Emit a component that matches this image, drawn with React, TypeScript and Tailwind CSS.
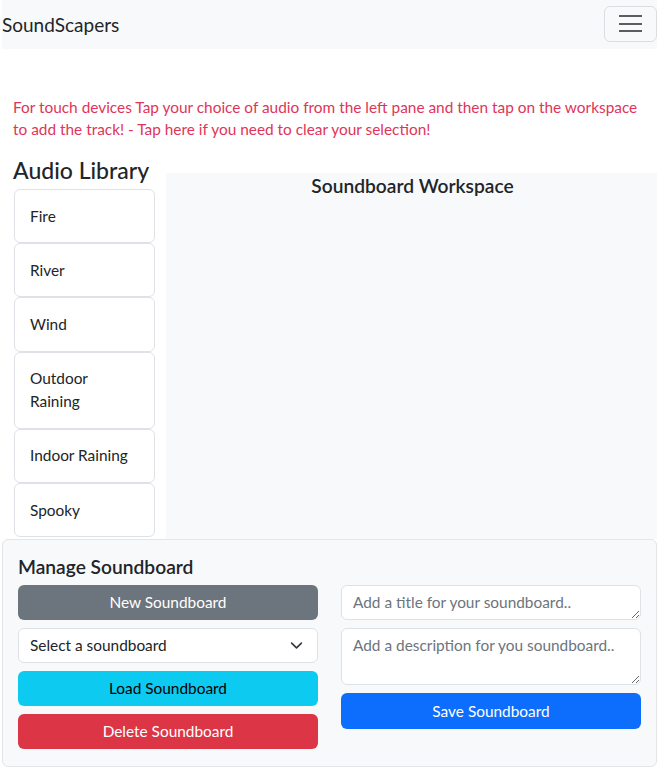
import React from "react";

const tracks = ["Fire", "River", "Wind", "Outdoor Raining", "Indoor Raining", "Spooky"];

export default function App() {
  return (
    <div className="min-h-[770px] bg-white text-[#212529] font-['Lato',sans-serif] text-[15.4px]">
      {/* Navbar */}
      <nav className="mx-[2px] h-[49px] bg-[#f8f9fa] flex items-center justify-between">
        <span className="text-[19px] leading-none">SoundScapers</span>
        <button className="w-[53px] h-[36px] mt-[-2px] border border-[#dcdde0] rounded-[6px] flex flex-col items-center justify-center gap-[5.5px]">
          <span className="block w-[23px] h-[2px] bg-[#5b5d60]" />
          <span className="block w-[23px] h-[2px] bg-[#5b5d60]" />
          <span className="block w-[23px] h-[2px] bg-[#5b5d60]" />
        </button>
      </nav>

      {/* Hint */}
      <p className="mt-[47px] px-[13px] text-[#e0355a] leading-[22px]">
        For touch devices Tap your choice of audio from the left pane and then tap on the workspace to add the track! - Tap here if you need to clear your selection!
      </p>

      {/* Library + workspace */}
      <div className="mt-[17px] flex">
        <div className="w-[153px] ml-[13px] shrink-0 pb-[2px]">
          <h3 className="text-[23px] leading-[27px] font-medium mb-[5px]">Audio Library</h3>
          <ul className="ml-[1px] w-[141px]">
            {tracks.map((t) => (
              <li
                key={t}
                className="border border-[#dee2e6] rounded-[6px] bg-white px-[15px] py-[14.6px] leading-[23px] text-[#212529]"
              >
                {t}
              </li>
            ))}
          </ul>
        </div>
        <div className="flex-1 mt-[16px] mr-[2px] bg-[#f8f9fa]">
          <h5 className="text-center text-[19.2px] font-semibold leading-[24px] mt-[1px] pl-[2px]">
            Soundboard Workspace
          </h5>
        </div>
      </div>

      {/* Manage panel */}
      <div className="mx-[2px] bg-[#f8f9fa] border border-[#e3e5e8] rounded-[6px] px-[15px] pt-[15px] pb-[17px]">
        <h5 className="text-[19.2px] font-semibold leading-[24px] mb-[6px]">Manage Soundboard</h5>
        <div className="grid grid-cols-[300px_300px] gap-x-[23px]">
          <div className="flex flex-col gap-[8px]">
            <button className="h-[35px] rounded-[6px] bg-[#6c757d] text-white">New Soundboard</button>
            <div className="h-[35px] rounded-[6px] bg-white border border-[#dee2e6] flex items-center justify-between pl-[11px] pr-[14px]">
              <span>Select a soundboard</span>
              <svg width="13" height="13" viewBox="0 0 16 16" fill="none" stroke="#343a40" strokeWidth="2" strokeLinecap="round" strokeLinejoin="round">
                <path d="M2 5l6 6 6-6" />
              </svg>
            </div>
            <button className="h-[35px] rounded-[6px] bg-[#0dcaf0] text-black">Load Soundboard</button>
            <button className="h-[35px] rounded-[6px] bg-[#dc3545] text-white">Delete Soundboard</button>
          </div>
          <div className="flex flex-col gap-[8px]">
            <textarea
              rows={1}
              placeholder="Add a title for your soundboard.."
              className="h-[35px] rounded-[6px] bg-white border border-[#dee2e6] px-[11px] py-[5px] leading-[23px] placeholder:text-[#6c757d] outline-none"
            />
            <textarea
              rows={2}
              placeholder="Add a description for you soundboard.."
              className="h-[57px] rounded-[6px] bg-white border border-[#dee2e6] px-[11px] py-[5px] leading-[23px] placeholder:text-[#6c757d] outline-none"
            />
            <button className="h-[36px] rounded-[6px] bg-[#0d6efd] text-white">Save Soundboard</button>
          </div>
        </div>
      </div>
    </div>
  );
}
